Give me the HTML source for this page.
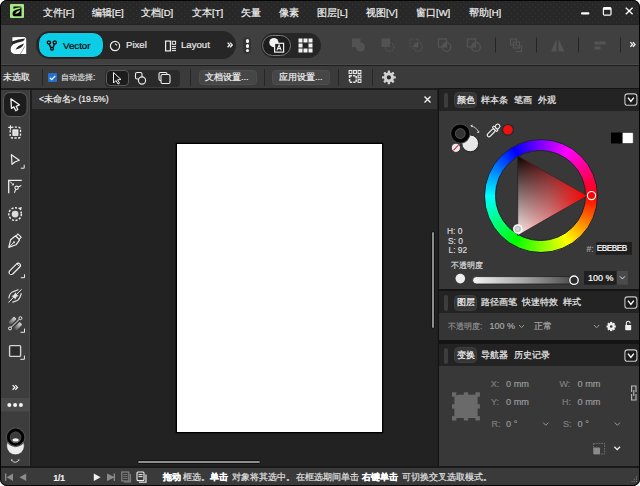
<!DOCTYPE html>
<html><head><meta charset="utf-8">
<style>
*{margin:0;padding:0;box-sizing:border-box}
html,body{width:640px;height:486px;overflow:hidden;background:#fff}
body{font-family:"Liberation Sans",sans-serif;color:#e8e8e8;position:relative}
.a{position:absolute}
.t{position:absolute;white-space:nowrap;line-height:1;-webkit-text-stroke:0.2px currentColor}
#win{position:absolute;left:0;top:0;width:640px;height:486px;background:#1e1e1e;border-radius:7px;overflow:hidden}
#title{left:0;top:0;width:640px;height:25px;background-color:#282828;background-image:radial-gradient(circle at 1.5px 1.5px,#363636 0.45px,transparent 0.8px),radial-gradient(circle at 4.5px 4.5px,#363636 0.45px,transparent 0.8px);background-size:6px 6px;border-bottom:1px solid #232323}
#tb{left:0;top:25px;width:640px;height:40px;background:#404040;border-bottom:1px solid #4a4a4a}
#tbline{left:0;top:65px;width:640px;height:1px;background:#1e1e1e}
#ctx{left:0;top:66px;width:640px;height:22px;background:#3b3b3b}
#ctxline{left:0;top:88px;width:640px;height:1.5px;background:#1c1c1c}
#lp{left:1px;top:89.5px;width:29px;height:377px;background:#3d3d3d;border-right:1px solid #474747}
#canvas{left:32px;top:109px;width:405px;height:358px;background:#222}
#tab{left:32px;top:90px;width:405px;height:19px;background:#333}
#page{left:177px;top:144px;width:205px;height:288px;background:#fff;box-shadow:0 0 0 1.3px #000}
#rp{left:437.5px;top:88px;width:202.5px;height:379px;background:#141414}
.ph{position:absolute;left:439.3px;width:200.7px;height:22px;background:#232323}
.pb{position:absolute;left:439.3px;width:200.7px;background:#383838}
#status{left:0;top:468px;width:640px;height:18px;background:#3a3a3a}
.st{top:473.3px;font-size:8.8px;color:#e0e0e0}
.b{font-weight:bold;color:#fff}
.ptab{font-size:8.5px;color:#e8e8e8}
.hsl{font-size:8.4px;color:#e0e0e0;-webkit-text-stroke:0.1px currentColor}
.tl{font-size:9px;color:#7c7c7c}
.tv{font-size:9.2px;color:#9a9a9a}
.menu{font-size:9.5px;color:#f0f0f0;top:8px}
</style></head><body>
<div id="win">
<div id="title" class="a"></div>
<div class="a" style="left:10px;top:4px;width:14px;height:14px;background:#a6e887;border-radius:1px"></div>
<svg class="a" style="left:10px;top:4px" width="14" height="14" viewBox="0 0 14 14">
<g transform="translate(1.5 0.7) scale(0.58)">
<path d="M3.4,3.3 Q10,2.8 15.3,3 Q17.2,3.3 17.2,5.6 L17.2,20 L6.8,20 Q1.6,20 1.7,15.6 Q1.9,12 4,10.4 L3.4,10 Z" fill="#000"/>
<path d="M2.6,7.2 Q9,4.8 16.2,4.3 Q15.8,7 13.6,7.6 Q8,8.6 2.6,11.2 Z" fill="#a6e887"/>
<path d="M6.2,16 Q7.8,11 15.3,9 Q13.6,14.8 6.2,16 Z" fill="#a6e887"/>
</g></svg>
<div class="t menu" style="left:43px">文件[F]</div>
<div class="t menu" style="left:92px">编辑[E]</div>
<div class="t menu" style="left:141px">文档[D]</div>
<div class="t menu" style="left:192px">文本[T]</div>
<div class="t menu" style="left:241px">矢量</div>
<div class="t menu" style="left:279px">像素</div>
<div class="t menu" style="left:317px">图层[L]</div>
<div class="t menu" style="left:366px">视图[V]</div>
<div class="t menu" style="left:416px">窗口[W]</div>
<div class="t menu" style="left:469px">帮助[H]</div>
<svg class="a" style="left:570px;top:0" width="70" height="25" viewBox="570 0 70 25">
<rect x="581" y="12.2" width="8.4" height="2.4" rx="1" fill="#fff"/>
<rect x="603.4" y="7.6" width="7.6" height="7.6" rx="1.2" fill="none" stroke="#fff" stroke-width="1.2"/>
<rect x="603.4" y="7.6" width="7.6" height="2.2" fill="#fff"/>
<path d="M625.8,7.8 L632.6,14.2 M632.6,7.8 L625.8,14.2" stroke="#fff" stroke-width="1.3"/>
</svg>


<div id="tb" class="a"></div>
<div id="tbline" class="a"></div>
<!-- toolbar -->
<svg class="a" style="left:9px;top:34px" width="20" height="22" viewBox="0 0 20 22">
<path d="M3.4,3.3 Q10,2.8 15.3,3 Q17.2,3.3 17.2,5.6 L17.2,20 L6.8,20 Q1.6,20 1.7,15.6 Q1.9,12 4,10.4 L3.4,10 Z" fill="#fff"/>
<path d="M2.8,7.4 Q9,5.2 15.9,4.6 Q15.6,6.6 13.8,7.2 Q8,8.2 2.8,10.8 Z" fill="#262626"/>
<path d="M6.6,15.6 Q8.2,11.4 15.1,9.4 Q13.2,14.2 6.6,15.6 Z" fill="#262626"/>
<path d="M11.2,20.2 L15.8,12.3" stroke="#555" stroke-width="0.6"/>
</svg>
<div class="a" style="left:36px;top:31px;width:200px;height:28px;background:#262626;border-radius:14px"></div>
<div class="a" style="left:38px;top:32px;width:66px;height:26px;background:#0ccde6;border-radius:11px;border:1px solid #2a1616"></div>
<svg class="a" style="left:44px;top:38px" width="16" height="16" viewBox="0 0 16 16">
<path d="M4.8,5.6 L6.9,9.6 M10.6,5.6 L9.1,9.6" stroke="#050505" stroke-width="1.4" fill="none"/>
<rect x="3.3" y="3.1" width="3.2" height="2.8" rx="1.1" fill="none" stroke="#050505" stroke-width="1.3"/>
<rect x="9.2" y="3.1" width="3.2" height="2.8" rx="1.1" fill="none" stroke="#050505" stroke-width="1.3"/>
<circle cx="8" cy="10.8" r="1.4" fill="none" stroke="#050505" stroke-width="1.3"/>
</svg>
<div class="t" style="left:63px;top:40.5px;font-size:9.7px;color:#000;-webkit-text-stroke:0.22px #000">Vector</div>
<svg class="a" style="left:109px;top:40px" width="12" height="12" viewBox="0 0 12 12">
<circle cx="6" cy="6" r="4.6" fill="none" stroke="#eee" stroke-width="1.2"/>
<path d="M6,3.6 L8,5.4" stroke="#eee" stroke-width="1.1"/>
</svg>
<div class="t" style="left:126px;top:40px;font-size:9.6px;color:#e8e8e8">Pixel</div>
<svg class="a" style="left:164px;top:40px" width="13" height="12" viewBox="0 0 13 12">
<rect x="1.6" y="1.1" width="4.8" height="9.8" fill="none" stroke="#eee" stroke-width="1.2"/>
<rect x="8.2" y="1.3" width="3.4" height="3" fill="none" stroke="#eee" stroke-width="1"/>
<path d="M7.8,6.6 H12 M7.8,8.6 H12 M7.8,10.6 H12" stroke="#eee" stroke-width="1"/>
</svg>
<div class="t" style="left:181px;top:40px;font-size:9.6px;color:#e8e8e8">Layout</div>
<svg class="a" style="left:226px;top:40px" width="10" height="9" viewBox="226 40 10 9"><path d="M227.6,42.6 L229.7,44.9 L227.6,47.2 M230.1,42.6 L232.2,44.9 L230.1,47.2" fill="none" stroke="#f4f4f4" stroke-width="1.3"/></svg>
<div class="a" style="left:243px;top:37px;width:8px;height:17px;background:#333;border-radius:4px"></div>
<div class="a" style="left:245.5px;top:39px;width:3.6px;height:3.6px;background:#f4f4f4;border-radius:50%"></div>
<div class="a" style="left:245.5px;top:44px;width:3.6px;height:3.6px;background:#f4f4f4;border-radius:50%"></div>
<div class="a" style="left:245.5px;top:48.6px;width:3.6px;height:3.6px;background:#f4f4f4;border-radius:50%"></div>
<div class="a" style="left:260.5px;top:32.5px;width:60.5px;height:25px;background:#262626;border-radius:12.5px"></div>
<div class="a" style="left:262px;top:35px;width:29px;height:21px;background:#1d1d1d;border:1px solid #7a7a7a;border-radius:10.5px"></div>
<svg class="a" style="left:268px;top:37px" width="18" height="17" viewBox="0 0 18 17">
<circle cx="5.9" cy="5.6" r="4.6" fill="#f2f2f2"/>
<rect x="6.6" y="6.3" width="9" height="8.8" fill="#1d1d1d" stroke="#f2f2f2" stroke-width="1.2"/>
<path d="M8.9,13.4 L11.1,8 L13.3,13.4 M9.7,11.6 H12.5" fill="none" stroke="#f2f2f2" stroke-width="1.1"/>
</svg>
<svg class="a" style="left:298px;top:38px" width="15" height="15" viewBox="0 0 15 15">
<g fill="#f2f2f2">
<rect x="0.5" y="0.5" width="4" height="4"/><rect x="5.5" y="0.5" width="4" height="4"/><rect x="10.5" y="0.5" width="4" height="4"/>
<rect x="0.5" y="5.5" width="4" height="4"/><rect x="10.5" y="5.5" width="4" height="4"/>
<rect x="0.5" y="10.5" width="4" height="4"/><rect x="5.5" y="10.5" width="4" height="4"/><rect x="10.5" y="10.5" width="4" height="4"/>
</g>
<rect x="5.5" y="5.5" width="4" height="4" fill="#262626"/>
</svg>


<svg class="a" style="left:340px;top:34px" width="300" height="22" viewBox="340 34 300 22">
<g fill="#545454" stroke="none" opacity="0.95">
<rect x="352" y="38.5" width="8.5" height="8.5"/><circle cx="360.5" cy="47" r="4.6"/>
<rect x="381.5" y="38.5" width="8.5" height="8.5"/>
</g>
<circle cx="389.5" cy="47" r="4.3" fill="none" stroke="#545454" stroke-width="1.2" stroke-dasharray="1.6 1.2"/>
<rect x="410" y="39" width="8" height="8" fill="none" stroke="#545454" stroke-width="1.1" stroke-dasharray="1.5 1.2"/>
<path d="M413.5,47 A4.3,4.3 0 0 1 418,42.6 V47 Z" fill="#545454"/>
<circle cx="418" cy="47" r="4.3" fill="none" stroke="#545454" stroke-width="1.1" stroke-dasharray="1.5 1.2"/>
<rect x="438.5" y="39" width="8" height="8" fill="none" stroke="#545454" stroke-width="1.3"/>
<circle cx="446.5" cy="47" r="4.3" fill="none" stroke="#545454" stroke-width="1.3"/>
<path d="M442.5,47 A4,4 0 0 1 446.5,43 V47 Z" fill="#545454"/>
<rect x="467.5" y="39" width="8" height="8" fill="none" stroke="#545454" stroke-width="1.3"/>
<circle cx="476" cy="47" r="4.3" fill="none" stroke="#545454" stroke-width="1.3"/>
<path d="M471.7,47 A4.3,4.3 0 0 1 476,42.7 L475.5,47 Z" fill="#545454" opacity="0.8"/>
<rect x="510.5" y="39" width="6" height="6" fill="none" stroke="#545454" stroke-width="1.2"/>
<rect x="513.5" y="42" width="6" height="6" fill="none" stroke="#545454" stroke-width="1.2"/>
<path d="M517,46 H521.5 V51.5 H516" fill="none" stroke="#545454" stroke-width="1.2"/>
<path d="M556.5,39 L551,51.5 H556.5 Z M558.5,39 L564.5,51.5 H558.5 Z" fill="#545454"/>
<rect x="594.5" y="41.5" width="11" height="3" fill="#545454"/>
<rect x="594.5" y="46.5" width="6" height="3" fill="#545454"/>
<g stroke="#242424" stroke-width="1"><path d="M495.5,37.5 V52.5 M536.5,37.5 V52.5 M578.5,37.5 V52.5 M620.5,37.5 V52.5"/></g>
</svg>
<svg class="a" style="left:628px;top:40px" width="10" height="9" viewBox="628 40 10 9"><path d="M630.4,42.1 L632.5,44.4 L630.4,46.7 M632.9,42.1 L635,44.4 L632.9,46.7" fill="none" stroke="#f4f4f4" stroke-width="1.3"/></svg>
<div id="ctx" class="a"></div>
<div id="ctxline" class="a"></div>
<div class="t" style="left:3px;top:72px;font-size:9.4px;color:#f0f0f0">未选取</div>
<div class="a" style="left:42px;top:69px;width:1px;height:17px;background:#262626"></div>
<div class="a" style="left:47.9px;top:72.8px;width:9.4px;height:9.4px;background:#2270d0;border-radius:1px"></div>
<svg class="a" style="left:48.1px;top:73px" width="9" height="9" viewBox="0 0 9 9"><path d="M1.8,4.8 L3.7,6.6 L7.3,2.8" fill="none" stroke="#fff" stroke-width="1.2"/></svg>
<div class="t" style="left:61px;top:72.7px;font-size:8.3px;color:#d8d8d8">自动选择:</div>
<div class="a" style="left:105px;top:69.5px;width:75px;height:17px;background:#2a2a2a;border-radius:4px"></div>
<div class="a" style="left:106px;top:70px;width:23px;height:16px;background:#1c1c1c;border:1px solid #5a5a5a;border-radius:4px"></div>
<svg class="a" style="left:106px;top:70px" width="75" height="16" viewBox="106 70 75 16">
<path d="M113.5,72.5 L113.5,83 L116,80.5 L118,84 L119.5,83.2 L117.6,79.8 L121,79.5 Z" fill="none" stroke="#eee" stroke-width="1" stroke-linejoin="round"/>
<rect x="135.5" y="72.5" width="6.5" height="6.5" rx="1.6" fill="none" stroke="#eee" stroke-width="1.1"/>
<circle cx="142" cy="80.5" r="3.6" fill="#2a2a2a" stroke="#eee" stroke-width="1.1"/>
<rect x="159" y="72.5" width="8" height="8" rx="1.5" fill="none" stroke="#eee" stroke-width="1.1"/>
<rect x="161" y="74.5" width="9" height="9" rx="1.5" fill="#2a2a2a" stroke="#eee" stroke-width="1.1"/>
</svg>
<div class="a" style="left:190px;top:69px;width:1px;height:17px;background:#262626"></div>
<div class="a" style="left:198.7px;top:69.5px;width:58px;height:15.5px;background:#464646;border:0.6px solid #4e4e4e;border-radius:3.5px"></div>
<div class="t" style="left:205px;top:72.7px;font-size:9.2px;color:#f0f0f0">文档设置...</div>
<div class="a" style="left:263.5px;top:69px;width:1px;height:17px;background:#262626"></div>
<div class="a" style="left:272px;top:69.5px;width:58px;height:15.5px;background:#464646;border:0.6px solid #4e4e4e;border-radius:3.5px"></div>
<div class="t" style="left:279px;top:72.7px;font-size:9.2px;color:#f0f0f0">应用设置...</div>
<div class="a" style="left:337.5px;top:69px;width:1px;height:17px;background:#262626"></div>
<svg class="a" style="left:346px;top:68px" width="18" height="18" viewBox="346 68 18 18">
<g fill="none" stroke="#e6e6e6" stroke-width="1.1">
<rect x="349.1" y="70.5" width="2.8" height="3"/><rect x="353.6" y="70.5" width="2.8" height="3"/><rect x="358.1" y="70.5" width="2.8" height="3"/>
<rect x="358.1" y="75.1" width="2.8" height="2.8"/><rect x="358.1" y="79.6" width="2.8" height="2.8"/>
</g>
<rect x="349.6" y="75.8" width="6.6" height="6.4" fill="none" stroke="#e6e6e6" stroke-width="1.6" stroke-dasharray="2.4 1"/>
</svg>
<div class="a" style="left:372px;top:69px;width:1px;height:17px;background:#262626"></div>
<svg class="a" style="left:381px;top:69px" width="16" height="16" viewBox="0 0 16 16">
<g fill="#d2d2d2" transform="translate(7.9 8.4)"><circle r="5"/><rect x="-1.2" y="-6.9" width="2.4" height="3" rx="0.6" transform="rotate(0)"/><rect x="-1.2" y="-6.9" width="2.4" height="3" rx="0.6" transform="rotate(45)"/><rect x="-1.2" y="-6.9" width="2.4" height="3" rx="0.6" transform="rotate(90)"/><rect x="-1.2" y="-6.9" width="2.4" height="3" rx="0.6" transform="rotate(135)"/><rect x="-1.2" y="-6.9" width="2.4" height="3" rx="0.6" transform="rotate(180)"/><rect x="-1.2" y="-6.9" width="2.4" height="3" rx="0.6" transform="rotate(225)"/><rect x="-1.2" y="-6.9" width="2.4" height="3" rx="0.6" transform="rotate(270)"/><rect x="-1.2" y="-6.9" width="2.4" height="3" rx="0.6" transform="rotate(315)"/></g>
<circle cx="7.9" cy="8.4" r="2.1" fill="#2a2a2a"/>
</svg>

<div id="lp" class="a"></div>
<svg class="a" style="left:0;top:88px" width="32" height="380" viewBox="0 88 32 380">
<rect x="3.5" y="92.5" width="23.5" height="24" rx="6.5" fill="#1d1d1d" stroke="#5a5a5a" stroke-width="1"/>
<path d="M10.9,98.9 L11.5,108.4 L13.8,106.9 L15.8,110.7 L17.8,109.5 L16.2,106.3 L19.4,104.8 Z" fill="#1d1d1d" stroke="#ececec" stroke-width="1.3" stroke-linejoin="round"/>
<g fill="none" stroke="#ececec" stroke-width="1.3">
<rect x="10.2" y="127.2" width="10.3" height="10.8" rx="2" stroke-dasharray="2.2 1.4" stroke-dashoffset="1"/>
</g>
<rect x="8.5" y="125.5" width="3.6" height="3.6" fill="#3b3b3b"/>
<path d="M10.45,125.2 V129.7 M8.2,127.45 H12.7" stroke="#ececec" stroke-width="1.2"/>
<rect x="12.9" y="129.9" width="5" height="5.4" fill="#d8d8d8" stroke="#fff" stroke-width="0.9"/>
<path d="M11.4,154.7 L19.3,160.3 L14.9,162 L12,164.3 Z" fill="none" stroke="#ececec" stroke-width="1.2" stroke-linejoin="round"/>
<path d="M20.8,168.2 H24.2 V164.8" fill="none" stroke="#ececec" stroke-width="1"/>
<path d="M8.7,193.3 V180.4 H21.8" fill="none" stroke="#ececec" stroke-width="1.3"/>
<path d="M9.9,181.4 L13.4,184.9" stroke="#ececec" stroke-width="1"/>
<path d="M11.4,185.4 L13.8,185.3 L13.9,182.9 Z" fill="#ececec"/>
<circle cx="16.6" cy="187.8" r="1.7" fill="none" stroke="#ececec" stroke-width="1.1"/>
<path d="M18.2,187 L21.3,185.6 M15.7,189.4 L14.4,192.8" stroke="#ececec" stroke-width="1.1"/>
<circle cx="15.1" cy="214.1" r="6.3" fill="none" stroke="#ececec" stroke-width="1.5" stroke-dasharray="2.1 1.5"/>
<rect x="17" y="206" width="5.5" height="5" fill="#3b3b3b"/>
<path d="M17.8,208 L21.8,207 L21,210.6 Z" fill="#ececec"/>
<circle cx="15.1" cy="214.1" r="3.4" fill="#dcdcdc"/>
<path d="M8.8,247.4 L10.6,239.8 L15.6,235.8 L19.6,239.8 L16,244.8 Z" fill="none" stroke="#ececec" stroke-width="1.2" stroke-linejoin="round"/>
<rect x="-2.3" y="-1.4" width="4.6" height="2.8" fill="#3b3b3b" stroke="#ececec" stroke-width="1.1" transform="translate(18.6 236.6) rotate(45)"/>
<path d="M9.6,246.6 L13.6,242.6" stroke="#ececec" stroke-width="1"/>
<circle cx="14" cy="242.2" r="1" fill="#ececec"/>
<rect x="-7" y="-2.2" width="14" height="4.4" rx="2.2" fill="none" stroke="#ececec" stroke-width="1.2" transform="translate(14.8 268.8) rotate(-45)"/>
<path d="M16.6,263.4 L19.4,266.2" stroke="#ececec" stroke-width="1"/>
<circle cx="10.7" cy="273" r="0.9" fill="#111"/>
<path d="M20.8,277.7 H24.5 V274.3" fill="none" stroke="#ececec" stroke-width="1"/>
<path d="M15.6,292.2 Q16,295.2 18.8,295.6 Q16,296.6 15.2,299.6 Q14.4,296.6 11.4,296.2 Q14.4,295.2 15.6,292.2 Z" fill="#e0e0e0"/>
<path d="M8.8,298.4 C9.4,294.4 10.8,292.6 12.9,291.8 C15,291 16.6,290.8 18.4,289.6" fill="none" stroke="#d6d6d6" stroke-width="1.2"/>
<path d="M12.4,302.4 C14.4,301.4 16.4,301.2 18,300 C19.8,298.6 20.4,296.4 21.4,293.2" fill="none" stroke="#d6d6d6" stroke-width="1.2"/>
<path d="M8.4,302.5 L21.5,289.4" stroke="#ececec" stroke-width="1"/>
<defs><linearGradient id="gb" x1="0" y1="0" x2="1" y2="0"><stop offset="0" stop-color="#555"/><stop offset="1" stop-color="#ddd"/></linearGradient></defs>
<rect x="-4.2" y="-1.9" width="8.4" height="3.8" rx="1.2" fill="url(#gb)" transform="translate(12.4 320.6) rotate(-45)"/>
<rect x="-4.2" y="-1.9" width="8.4" height="3.8" rx="1.2" fill="url(#gb)" transform="translate(18 326.2) rotate(-45)"/>
<path d="M10.6,327.8 L19.8,318.8" stroke="#ececec" stroke-width="1"/>
<circle cx="10" cy="328.4" r="1.5" fill="#3b3b3b" stroke="#ececec" stroke-width="1"/>
<circle cx="20.4" cy="318.2" r="1.5" fill="#3b3b3b" stroke="#ececec" stroke-width="1"/>
<path d="M20.5,332.3 H24.5 V328.6" fill="none" stroke="#ececec" stroke-width="1"/>
<rect x="9.6" y="345.6" width="11" height="10.8" rx="1" fill="#2b2b2b" stroke="#d4d4d4" stroke-width="1.4"/>
<path d="M20.4,359.3 H24.4 V355.6" fill="none" stroke="#ececec" stroke-width="1"/>
<rect x="1" y="398" width="29" height="13.5" fill="#4a4a4a"/>
<circle cx="9.3" cy="405" r="2" fill="#f4f4f4"/><circle cx="15.1" cy="405" r="2" fill="#f4f4f4"/><circle cx="20.9" cy="405" r="2" fill="#f4f4f4"/>
<circle cx="15.45" cy="446" r="8.85" fill="#ececec" stroke="#2a2a2a" stroke-width="0.6"/>
<circle cx="15.6" cy="437.3" r="9.4" fill="none" stroke="#505050" stroke-width="1.1"/>
<circle cx="15.6" cy="437.3" r="7.1" fill="none" stroke="#000" stroke-width="3.2"/>
<circle cx="15.6" cy="437.3" r="5.4" fill="#3a3a3a" stroke="#555" stroke-width="0.7"/><ellipse cx="15.6" cy="439.9" rx="3.1" ry="1.7" fill="#f4f4f4"/>
<path d="M11.6,460.2 Q15.2,464.4 18.8,460.2" fill="none" stroke="#cfcfcf" stroke-width="1"/>
<path d="M10.8,459.2 L13,459.7 L11.4,461.3 Z M19.6,459.2 L17.4,459.7 L19,461.3 Z" fill="#cfcfcf"/>
</svg>
<svg class="a" style="left:11px;top:383px" width="10" height="9" viewBox="11 383 10 9"><path d="M12.6,385.1 L14.8,387.4 L12.6,389.7 M15.3,385.1 L17.5,387.4 L15.3,389.7" fill="none" stroke="#f4f4f4" stroke-width="1.3"/></svg>

<div id="tab" class="a"></div>
<div class="t" style="left:39px;top:95.3px;font-size:8.6px;color:#eee">&lt;未命名&gt; (19.5%)</div>
<div id="canvas" class="a"></div>
<div id="page" class="a"></div>
<div class="a" style="left:431.2px;top:231px;width:4.3px;height:97.5px;background:#8e8e8e;border:0.8px solid #111;border-radius:2.2px"></div>
<div class="a" style="left:137.3px;top:459.8px;width:124px;height:4.6px;background:#8e8e8e;border:0.8px solid #111;border-radius:2.3px"></div>
<svg class="a" style="left:423px;top:95px" width="9" height="9" viewBox="0 0 9 9"><path d="M1.5,1.6 L7.5,7.4 M7.5,1.6 L1.5,7.4" stroke="#f0f0f0" stroke-width="1.4"/></svg>

<div id="rp" class="a"></div>
<div class="ph" style="top:89px"></div>
<div class="pb" style="top:111px;height:178px"></div>
<!-- color panel header -->
<div class="a" style="left:444px;top:92.5px;width:4px;height:15.5px;background:#3d3d3d;border-radius:2px"></div>
<div class="a" style="left:453.5px;top:92px;width:23.5px;height:16px;background:#363636;border:1px solid #3e3e3e;border-radius:4.5px"></div>
<div class="t ptab" style="left:456.5px;top:95.5px;color:#fafafa">颜色</div>
<div class="t ptab" style="left:480.5px;top:95.5px">样本条</div>
<div class="t ptab" style="left:514px;top:95.5px">笔画</div>
<div class="t ptab" style="left:537.5px;top:95.5px">外观</div>
<svg class="a chev" style="left:624px;top:93px" width="14" height="13" viewBox="0 0 14 13"><rect x="0.9" y="0.9" width="12" height="11.4" rx="2.6" fill="#1c1c1c" stroke="#c8c8c8" stroke-width="1.1"/><path d="M4,4.6 L6.9,8.4 L9.8,4.6" fill="none" stroke="#fff" stroke-width="1.4"/></svg>
<!-- color panel body -->
<svg class="a" style="left:440px;top:111px" width="200" height="178" viewBox="440 111 200 178">
<defs>
<linearGradient id="tri1" x1="517.7" y1="156" x2="517.7" y2="235.6" gradientUnits="userSpaceOnUse"><stop offset="0" stop-color="#000"/><stop offset="1" stop-color="#fff"/></linearGradient>
<linearGradient id="tri2" x1="517.7" y1="195.8" x2="586.7" y2="195.8" gradientUnits="userSpaceOnUse"><stop offset="0" stop-color="#ff0000" stop-opacity="0.05"/><stop offset="0.45" stop-color="#f01818" stop-opacity="0.4"/><stop offset="1" stop-color="#ff0000" stop-opacity="1"/></linearGradient>
<linearGradient id="sl" x1="0" y1="0" x2="1" y2="0"><stop offset="0" stop-color="#f4f4f4"/><stop offset="0.5" stop-color="#a8a8a8"/><stop offset="1" stop-color="#4a4a4a"/></linearGradient>
</defs>
<circle cx="470.2" cy="143.4" r="8.4" fill="#e8e8e8" stroke="#222" stroke-width="1"/>
<circle cx="460.3" cy="133.6" r="10.2" fill="#4a4a4a"/>
<circle cx="460.3" cy="133.6" r="7.1" fill="none" stroke="#000" stroke-width="4.2"/>
<circle cx="460.3" cy="133.6" r="4.9" fill="#333" stroke="#5a5a5a" stroke-width="0.8"/>
<circle cx="455.9" cy="147.8" r="4.6" fill="#ececec" stroke="#2a2a2a" stroke-width="0.9"/>
<path d="M453.4,150.4 L458.4,145.2" stroke="#e8303a" stroke-width="1.2"/>
<path d="M471,126 Q476.5,127 478.6,132.2" fill="none" stroke="#cfcfcf" stroke-width="0.9"/>
<path d="M470.2,125.4 L472.6,124.6 L472.2,127.4 Z M479,133 L476.6,132.4 L479.4,130.8 Z" fill="#cfcfcf"/>
<g transform="translate(493.7 130.3) rotate(-45)">
<rect x="-8.4" y="-1.7" width="9.6" height="3.4" rx="1.6" fill="#383838" stroke="#f0f0f0" stroke-width="1.2"/>
<rect x="1.2" y="-3.1" width="2" height="6.2" rx="0.6" fill="#383838" stroke="#f0f0f0" stroke-width="1"/>
<rect x="3.2" y="-2.1" width="4.6" height="4.2" rx="2" fill="#383838" stroke="#f0f0f0" stroke-width="1.1"/>
</g>
<circle cx="507.9" cy="129.8" r="6.1" fill="#262a2e"/>
<circle cx="507.9" cy="129.8" r="4.8" fill="#f01010"/>
<rect x="611" y="132.5" width="11.5" height="11" fill="#000"/>
<rect x="622.3" y="132.5" width="11" height="11" rx="1.2" fill="#fff" stroke="#222" stroke-width="0.6"/>
</svg>
<div class="a" style="left:483.7px;top:138.8px;width:114px;height:114px;border-radius:50%;background:conic-gradient(from 90deg, #f00, #ff0, #0f0, #0ff, #00f, #f0f, #f00);border:0.8px solid #1d2430"></div>
<div class="a" style="left:495.3px;top:150.4px;width:90.8px;height:90.8px;border-radius:50%;background:#383838;border:0.8px solid #1d2430"></div>
<svg class="a" style="left:440px;top:111px" width="200" height="178" viewBox="440 111 200 178">
<polygon points="517.7,156 586.7,195.8 517.7,235.6" fill="url(#tri1)" stroke="#222" stroke-width="0.8"/>
<polygon points="517.7,156 586.7,195.8 517.7,235.6" fill="url(#tri2)"/>

<circle cx="591.5" cy="195.6" r="4.1" fill="none" stroke="#fff" stroke-width="1.2"/>
<circle cx="517.8" cy="229" r="4.2" fill="#d8d8d8" stroke="#fff" stroke-width="1.2"/>
<circle cx="517.8" cy="229" r="2.4" fill="none" stroke="#aaa" stroke-width="0.7"/>
<rect x="596" y="242" width="36" height="12.7" fill="#1f1f1f"/>
<circle cx="460.3" cy="278.6" r="4.8" fill="#eeeeee"/>
<rect x="472.6" y="276.6" width="101" height="7.4" rx="3.7" fill="url(#sl)" stroke="#1e1e1e" stroke-width="0.8"/>
<circle cx="574" cy="280.2" r="5.4" fill="#1a1a1a"/><circle cx="574" cy="280.2" r="4.2" fill="#2a2a2a" stroke="#fff" stroke-width="1.4"/>
<rect x="584" y="271" width="32.5" height="13.7" fill="#1f1f1f"/>
<rect x="617" y="271" width="10.8" height="13.7" fill="#4a4a4a"/>
<path d="M620,276.4 L622.4,279 L624.8,276.4" fill="none" stroke="#ddd" stroke-width="1"/>
</svg>
<div class="t hsl" style="left:447px;top:226.8px">H: 0</div>
<div class="t hsl" style="left:448px;top:236.5px">S: 0</div>
<div class="t hsl" style="left:448.5px;top:246.3px">L: 92</div>
<div class="t" style="left:586.5px;top:245px;font-size:8.6px;color:#a0a0a0">#:</div>
<div class="t" style="left:596.8px;top:245.3px;font-size:8.2px;letter-spacing:-0.45px;color:#fff">EBEBEB</div>
<div class="t" style="left:451px;top:262px;font-size:8.2px;color:#d8d8d8">不透明度</div>
<div class="t" style="left:588px;top:274.3px;font-size:9px;color:#fff">100 %</div>

<div class="ph" style="top:291px"></div>
<div class="pb" style="top:313px;height:27px;background:#353535"></div>
<div class="a" style="left:444px;top:295px;width:4px;height:15.5px;background:#3d3d3d;border-radius:2px"></div>
<div class="a" style="left:453.5px;top:294.7px;width:23.5px;height:16px;background:#363636;border:1px solid #3e3e3e;border-radius:4.5px"></div>
<div class="t ptab" style="left:456.5px;top:298px;color:#fafafa">图层</div>
<div class="t ptab" style="left:481px;top:298px">路径画笔</div>
<div class="t ptab" style="left:522px;top:298px">快速特效</div>
<div class="t ptab" style="left:563px;top:298px">样式</div>
<svg class="a" style="left:624px;top:295.5px" width="14" height="13" viewBox="0 0 14 13"><rect x="0.9" y="0.9" width="12" height="11.4" rx="2.6" fill="#1c1c1c" stroke="#c8c8c8" stroke-width="1.1"/><path d="M4,4.6 L6.9,8.4 L9.8,4.6" fill="none" stroke="#fff" stroke-width="1.4"/></svg>
<div class="t" style="left:448px;top:322.5px;font-size:8.2px;color:#8a8a8a">不透明度:</div>
<div class="t" style="left:489.5px;top:322.3px;font-size:9px;color:#a8a8a8">100 %</div>
<svg class="a" style="left:440px;top:313px" width="200" height="27" viewBox="440 313 200 27">
<path d="M519,325 L521.5,327.6 L524,325" fill="none" stroke="#999" stroke-width="1"/>
<path d="M594,325 L596.6,327.8 L599.2,325" fill="none" stroke="#999" stroke-width="1"/>
<g transform="translate(611.2 326.5)" fill="#f0f0f0">
<circle r="3.3"/>
<rect x="-1.1" y="-4.6" width="2.2" height="2.2"/><rect x="-1.1" y="-4.6" width="2.2" height="2.2" transform="rotate(45)"/><rect x="-1.1" y="-4.6" width="2.2" height="2.2" transform="rotate(90)"/><rect x="-1.1" y="-4.6" width="2.2" height="2.2" transform="rotate(135)"/><rect x="-1.1" y="-4.6" width="2.2" height="2.2" transform="rotate(180)"/><rect x="-1.1" y="-4.6" width="2.2" height="2.2" transform="rotate(225)"/><rect x="-1.1" y="-4.6" width="2.2" height="2.2" transform="rotate(270)"/><rect x="-1.1" y="-4.6" width="2.2" height="2.2" transform="rotate(315)"/>
</g>
<circle cx="611.2" cy="326.5" r="1.3" fill="#383838"/>
<path d="M626.4,325 V323 A1.8,1.8 0 0 1 630,323 V323.6" fill="none" stroke="#f0f0f0" stroke-width="1.1"/>
<rect x="625.2" y="325" width="6" height="5.2" rx="0.6" fill="#f0f0f0"/>
</svg>
<div class="t" style="left:534px;top:322px;font-size:9px;color:#a8a8a8">正常</div>

<div class="ph" style="top:344px"></div>
<div class="pb" style="top:366px;height:101px"></div>
<div class="a" style="left:444px;top:348px;width:4px;height:15.5px;background:#3d3d3d;border-radius:2px"></div>
<div class="a" style="left:453.5px;top:347px;width:23.5px;height:16px;background:#363636;border:1px solid #3e3e3e;border-radius:4.5px"></div>
<div class="t ptab" style="left:456.5px;top:350.5px;color:#fafafa">变换</div>
<div class="t ptab" style="left:481px;top:350.5px">导航器</div>
<div class="t ptab" style="left:514px;top:350.5px">历史记录</div>
<svg class="a" style="left:624px;top:348.5px" width="14" height="13" viewBox="0 0 14 13"><rect x="0.9" y="0.9" width="12" height="11.4" rx="2.6" fill="#1c1c1c" stroke="#c8c8c8" stroke-width="1.1"/><path d="M4,4.6 L6.9,8.4 L9.8,4.6" fill="none" stroke="#fff" stroke-width="1.4"/></svg>
<svg class="a" style="left:440px;top:366px" width="200" height="101" viewBox="440 366 200 101">
<rect x="454.4" y="394.7" width="23.2" height="23.3" fill="#6a6a6a"/>
<g fill="#6a6a6a">
<rect x="452" y="392.3" width="4.4" height="4.4"/><rect x="463.8" y="392.3" width="4.4" height="4.4"/><rect x="475.5" y="392.3" width="4.4" height="4.4"/>
<rect x="452" y="404.2" width="4.4" height="4.4"/><rect x="475.5" y="404.2" width="4.4" height="4.4"/>
<rect x="452" y="416.1" width="4.4" height="4.4"/><rect x="463.8" y="416.1" width="4.4" height="4.4"/><rect x="475.5" y="416.1" width="4.4" height="4.4"/>
</g>
<g fill="#383838">
<rect x="456.4" y="393.3" width="1" height="2"/>
</g>
<path d="M543.2,422.6 L545.8,425.3 L548.4,422.6 M614.8,422.6 L617.4,425.3 L620,422.6" fill="none" stroke="#999" stroke-width="1"/>
<path d="M631.6,392 V386 H636 V392 M631.6,394 V400 H636 V394 M633.8,390 V396" fill="none" stroke="#bbb" stroke-width="1.1"/>
<rect x="593.6" y="443.4" width="11" height="10.6" fill="none" stroke="#777" stroke-width="0.9" stroke-dasharray="1.6 1"/>
<rect x="593.4" y="447.6" width="6.6" height="6.6" rx="1" fill="#8a8a8a"/>
<path d="M614.4,446.8 L617.2,449.6 L620,446.8" fill="none" stroke="#f0f0f0" stroke-width="1.3"/>
</svg>
<div class="t tl" style="left:490.8px;top:379.5px">X:</div>
<div class="t tv" style="left:506px;top:379.5px">0 mm</div>
<div class="t tl" style="left:491px;top:397.7px">Y:</div>
<div class="t tv" style="left:506px;top:397.7px">0 mm</div>
<div class="t tl" style="left:491.5px;top:420px">R:</div>
<div class="t tv" style="left:506px;top:420px">0 °</div>
<div class="t tl" style="left:559.5px;top:379.5px">W:</div>
<div class="t tv" style="left:577.5px;top:379.5px">0 mm</div>
<div class="t tl" style="left:562px;top:397.7px">H:</div>
<div class="t tv" style="left:577.5px;top:397.7px">0 mm</div>
<div class="t tl" style="left:563px;top:420px">S:</div>
<div class="t tv" style="left:577.5px;top:420px">0 °</div>

<div id="status" class="a"></div>
<div class="a" style="left:0;top:466px;width:640px;height:2px;background:#1a1a1a"></div>
<svg class="a" style="left:0;top:468px" width="160" height="18" viewBox="0 468 160 18">
<g fill="#8a8a8a">
<rect x="5" y="473.4" width="1.3" height="7.5"/>
<path d="M6.6,477.2 L13,473.4 V480.9 Z"/>
<path d="M19.4,477.2 L26.2,473.4 V480.9 Z"/>
<path d="M115,477.2 L107,473.4 V480.9 Z"/>
<rect x="113.7" y="473.4" width="1.3" height="7.5"/>
</g>
<path d="M100.6,477.2 L93.8,473.4 V480.9 Z" fill="#f0f0f0"/>
<rect x="121.8" y="472" width="7" height="9" fill="none" stroke="#8a8a8a" stroke-width="1.1"/>
<path d="M123,474.5 H127.6 M123,476.5 H127.6 M123,478.5 H127.6" stroke="#6e6e6e" stroke-width="1"/>
<path d="M130.3,474 V482 H124" fill="none" stroke="#8a8a8a" stroke-width="1.1"/>
<rect x="137" y="472" width="7" height="8.6" rx="1" fill="none" stroke="#f0f0f0" stroke-width="1.1"/>
<path d="M138.5,474.6 H142.5 M138.5,476.6 H142.5" stroke="#f0f0f0" stroke-width="1"/>
<path d="M146,474.5 V482.3 H139" fill="none" stroke="#f0f0f0" stroke-width="1.1"/>
</svg>
<div class="t" style="left:53.5px;top:474.6px;font-size:8.2px;font-weight:bold;color:#f4f4f4">1/1</div>
<div class="t st b" style="left:162.5px">拖动</div>
<div class="t st" style="left:183px">框选。</div>
<div class="t st b" style="left:210px">单击</div>
<div class="t st" style="left:232px">对象将其选中。</div>
<div class="t st" style="left:296px">在框选期间单击</div>
<div class="t st b" style="left:362px">右键单击</div>
<div class="t st" style="left:401.5px">可切换交叉选取模式。</div>
<svg class="a" style="left:626px;top:472px" width="12" height="12" viewBox="0 0 12 12"><g fill="#8a8a8a"><rect x="10" y="4.5" width="1" height="1"/><rect x="10" y="6.7" width="1" height="1"/><rect x="10" y="8.9" width="1" height="1"/><rect x="7.8" y="6.7" width="1" height="1"/><rect x="7.8" y="8.9" width="1" height="1"/><rect x="5.6" y="8.9" width="1" height="1"/></g></svg>

<div class="a" style="left:0;top:0;width:640px;height:486px;border:1.3px solid #050505;border-radius:7px"></div>
</div>
</body></html>
